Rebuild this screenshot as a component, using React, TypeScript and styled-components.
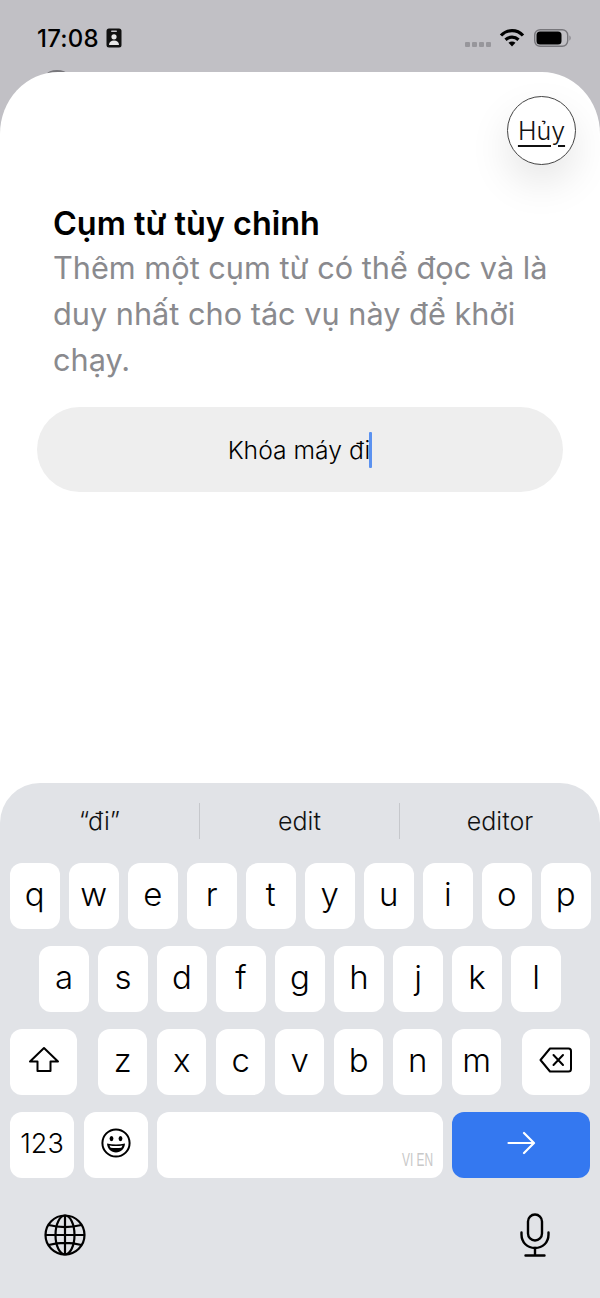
import styled, { createGlobalStyle } from "styled-components";

const GlobalStyle = createGlobalStyle`
    html, body {
        margin: 0;
        padding: 0;
        background: #ffffff;
    }
    * {
        box-sizing: border-box;
    }
`

const Page = styled.div`
    position: relative;
    width: 600px;
    height: 1298px;
    display: flex;
    flex-direction: column;
    background-color: #c1c0c5;
    font-family: Inter, "Noto Sans", "Liberation Sans", sans-serif;
    color: #000;
    overflow: hidden;
`

const StatusBar = styled.header`
    flex: 0 0 72px;
    display: flex;
    align-items: center;
    justify-content: space-between;
    padding: 4px 28px 0 37px;
`

const Clock = styled.div`
    display: flex;
    align-items: center;
    gap: 7px;
    font-size: 24px;
    font-weight: 500;
    letter-spacing: 0.2px;
`

const StatusIcons = styled.div`
    display: flex;
    align-items: center;
`

// the edge of something sitting behind the sheet
const PeekingEdge = styled.span`
    position: absolute;
    top: 70px;
    left: 47px;
    width: 20px;
    height: 8px;
    border-radius: 50%;
    background-color: #77767b;
`

const Sheet = styled.main`
    position: relative;
    flex: 1;
    display: flex;
    flex-direction: column;
    background-color: #fff;
    border-radius: 58px 58px 0 0 / 62px 62px 0 0;
`

const SheetTop = styled.div`
    display: flex;
    justify-content: flex-end;
    padding: 24px 24px 0 0;
`

const CancelButton = styled.button`
    width: 69px;
    height: 69px;
    padding: 0;
    border: 1px solid #444;
    border-radius: 50%;
    background-color: #fff;
    box-shadow: 0 18px 40px rgba(0, 0, 0, 0.1);
    font-family: inherit;
    font-size: 25px;
    font-weight: 300;
    color: #111;
    text-decoration: underline;
    text-underline-offset: 5px;
    text-decoration-thickness: 1.5px;
`

const Intro = styled.section`
    padding: 39px 40px 0 53px;
`

const Title = styled.h1`
    margin: 0;
    font-size: 32.4px;
    line-height: 40px;
    font-weight: 600;
`

const Description = styled.p`
    margin: 1px 0 0;
    font-size: 30.7px;
    line-height: 46px;
    color: #8a8a8e;
`

const PhraseField = styled.div`
    height: 85px;
    margin: 24px 37px 0;
    display: flex;
    align-items: center;
    justify-content: center;
    border-radius: 43px;
    background-color: #eeeeee;
    font-size: 24.7px;
    font-weight: 300;
`

const Caret = styled.span`
    display: inline-block;
    width: 3px;
    height: 36px;
    margin-left: -1px;
    background-color: #5b92f0;
    border-radius: 1px;
`

const Keyboard = styled.section`
    margin-top: auto;
    height: 515px;
    display: flex;
    flex-direction: column;
    background-color: #e1e3e7;
    border-radius: 40px 40px 0 0;
`

const Suggestions = styled.div`
    height: 80px;
    padding-top: 20px;
    display: grid;
    grid-template-columns: repeat(3, 1fr);
    align-items: start;
`

const Suggestion = styled.div`
    height: 36px;
    display: flex;
    align-items: center;
    justify-content: center;
    font-size: 25px;
    font-weight: 300;
    color: #111;
    border-right: 1px solid #c6c8cc;

    &:last-child {
        border-right: none;
    }
`

const Rows = styled.div`
    display: flex;
    flex-direction: column;
    gap: 17px;
    padding: 0 10px;
`

const Row = styled.div<{ $inset?: number }>`
    height: 66px;
    display: flex;
    gap: 9.5px;
    padding: 0 ${(p) => p.$inset ?? 0}px;
`

const Key = styled.div<{ $width?: number; $grow?: boolean; $spaceLeft?: number; $spaceRight?: number }>`
    position: relative;
    flex: ${(p) => (p.$grow ? "1" : `0 0 ${p.$width ?? 49.5}px`)};
    margin-left: ${(p) => p.$spaceLeft ?? 0}px;
    margin-right: ${(p) => p.$spaceRight ?? 0}px;
    display: flex;
    align-items: center;
    justify-content: center;
    border-radius: 12px;
    background-color: #fff;
    font-size: 33px;
    font-weight: 300;
    padding-bottom: 4px;
`

const NumberKey = styled(Key)`
    font-size: 27px;
    font-weight: 300;
    padding-bottom: 4px;
`

const GoKey = styled(Key)`
    background-color: #3478f0;
    padding-bottom: 4px;
`

const LanguageHint = styled.span`
    position: absolute;
    right: 9px;
    bottom: 7px;
    font-family: "Liberation Sans", sans-serif;
    font-size: 18px;
    font-weight: 400;
    color: #c8c8c8;
    transform: scaleX(0.66);
    transform-origin: right center;
    white-space: nowrap;
`

const BottomBar = styled.div`
    display: flex;
    align-items: center;
    justify-content: space-between;
    padding: 35px 50px 0 44px;
`

const row1 = ["q", "w", "e", "r", "t", "y", "u", "i", "o", "p"];
const row2 = ["a", "s", "d", "f", "g", "h", "j", "k", "l"];
const row3 = ["z", "x", "c", "v", "b", "n", "m"];

export default function App() {
    return (
        <Page>
            <GlobalStyle />
            <StatusBar>
                <Clock>
                    17:08
                    <svg width="16" height="20" viewBox="0 0 16 20">
                        <rect x="0.5" y="0.5" width="15" height="19" rx="2.5" fill="#111" />
                        <rect x="5" y="2.5" width="6" height="1.6" rx="0.8" fill="#c1c0c5" />
                        <circle cx="8" cy="8.8" r="2.6" fill="#e8e8e8" />
                        <path d="M3 17c0-3 2-4.600 5-4.600s5 1.600 5 4.600z" fill="#e8e8e8" />
                    </svg>
                </Clock>
                <StatusIcons>
                    <svg width="108" height="24" viewBox="0 0 108 24">
                        <g fill="#97969b">
                            <rect x="1" y="16" width="5" height="5" rx="1" />
                            <rect x="8" y="16" width="5" height="5" rx="1" />
                            <rect x="15" y="16" width="5" height="5" rx="1" />
                            <rect x="22" y="16" width="5" height="5" rx="1" />
                        </g>
                        <g fill="none" stroke="#000" strokeWidth="3.2">
                            <path d="M37 9.500c6-6.500 16-6.500 22 0" />
                            <path d="M41.500 13.800c3.800-3.500 9.200-3.500 13 0" />
                        </g>
                        <path d="M44.500 16.800c2-1.600 5-1.600 7 0l-3.500 3.800z" fill="#000" />
                        <rect x="70.700" y="3.700" width="33" height="16.600" rx="5.500" fill="none" stroke="#77767b" strokeWidth="1.400" />
                        <rect x="72.500" y="5.500" width="25" height="13" rx="3.500" fill="#000" />
                        <path d="M105.500 9.500c1.400.4 1.400 4.600 0 5z" fill="#77767b" />
                    </svg>
                </StatusIcons>
            </StatusBar>
            <PeekingEdge />
            <Sheet>
                <SheetTop>
                    <CancelButton>Hủy</CancelButton>
                </SheetTop>
                <Intro>
                    <Title>Cụm từ tùy chỉnh</Title>
                    <Description>Thêm một cụm từ có thể đọc và là duy nhất cho tác vụ này để khởi chạy.</Description>
                </Intro>
                <PhraseField>
                    Khóa máy đi
                    <Caret />
                </PhraseField>
                <Keyboard>
                    <Suggestions>
                        <Suggestion>“đi”</Suggestion>
                        <Suggestion>edit</Suggestion>
                        <Suggestion>editor</Suggestion>
                    </Suggestions>
                    <Rows>
                        <Row>
                            {row1.map((k) => (
                                <Key key={k}>{k}</Key>
                            ))}
                        </Row>
                        <Row $inset={29.25}>
                            {row2.map((k) => (
                                <Key key={k}>{k}</Key>
                            ))}
                        </Row>
                        <Row>
                            <Key $width={67} $spaceRight={11.4}>
                                <svg width="32" height="28" viewBox="0 0 32 28" fill="none" stroke="#000" strokeWidth="2" strokeLinejoin="round">
                                    <path d="M16 2 2 15.500h7.500V25h13v-9.500H30z" />
                                </svg>
                            </Key>
                            {row3.map((k) => (
                                <Key key={k}>{k}</Key>
                            ))}
                            <Key $width={68} $spaceLeft={11}>
                                <svg width="33" height="26" viewBox="0 0 33 26" fill="none" stroke="#000" strokeWidth="2" strokeLinejoin="round" strokeLinecap="round">
                                    <path d="M11 1.500h18.500a2.500 2.500 0 0 1 2.500 2.500v18a2.500 2.500 0 0 1-2.500 2.500H11L1.500 13z" />
                                    <path d="M14.500 8 24 18M24 8l-9.500 10" />
                                </svg>
                            </Key>
                        </Row>
                        <Row>
                            <NumberKey $width={64}>123</NumberKey>
                            <Key $width={64}>
                                <svg width="30" height="30" viewBox="0 0 30 30">
                                    <circle cx="15" cy="15" r="13.600" fill="none" stroke="#000" strokeWidth="2" />
                                    <ellipse cx="10.500" cy="10.600" rx="1.900" ry="2.600" fill="#000" />
                                    <ellipse cx="19.500" cy="10.600" rx="1.900" ry="2.600" fill="#000" />
                                    <path d="M6 15.500c5.500 1.200 12.500 1.200 18 0-.4 5.400-4.200 9-9 9s-8.600-3.600-9-9z" fill="#000" />
                                    <path d="M8.500 17.400c4 .7 9 .7 13 0-.4 1-.7 1.700-1.200 2.300-3.400.5-7.200.5-10.600 0-.5-.6-.9-1.300-1.200-2.300z" fill="#fff" />
                                </svg>
                            </Key>
                            <Key $grow>
                                <LanguageHint>VI EN</LanguageHint>
                            </Key>
                            <GoKey $width={138}>
                                <svg width="29" height="24" viewBox="0 0 29 24" fill="none" stroke="#fff" strokeWidth="2.200" strokeLinecap="round" strokeLinejoin="round">
                                    <path d="M1.500 12h25M17 2l10 10-10 10" />
                                </svg>
                            </GoKey>
                        </Row>
                    </Rows>
                    <BottomBar>
                        <svg width="42" height="42" viewBox="0 0 42 42" fill="none" stroke="#000" strokeWidth="2.200">
                            <circle cx="21" cy="21" r="19.500" />
                            <ellipse cx="21" cy="21" rx="9.500" ry="19.500" />
                            <path d="M21 1.500v39M1.500 21h39M4.500 11c10.500 2.600 22.500 2.600 33 0M4.500 31c10.500-2.600 22.500-2.600 33 0" />
                        </svg>
                        <svg width="30" height="44" viewBox="0 0 30 44" fill="none" stroke="#000" strokeWidth="2.400" strokeLinecap="round">
                            <rect x="8" y="1.500" width="14" height="26" rx="7" />
                            <path d="M1.500 19.500v2c0 8 5.800 13.500 13.500 13.500s13.500-5.500 13.500-13.500v-2" />
                            <path d="M15 35v7M5.500 42.500h19" />
                        </svg>
                    </BottomBar>
                </Keyboard>
            </Sheet>
        </Page>
    )
}
